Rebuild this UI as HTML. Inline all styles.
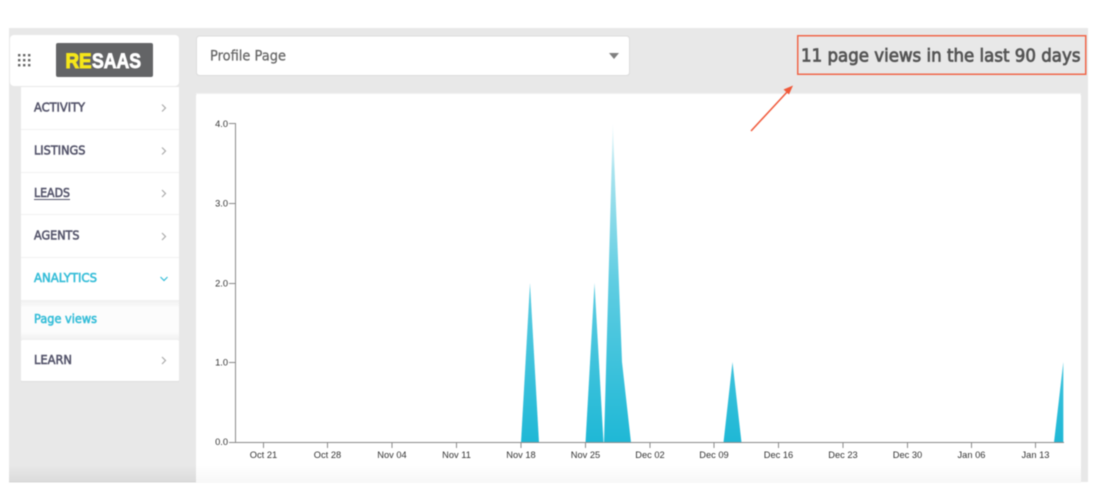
<!DOCTYPE html>
<html>
<head>
<meta charset="utf-8">
<style>
html,body{margin:0;padding:0;background:#fff;width:1108px;height:502px;overflow:hidden}
svg{display:block;filter:blur(.45px)}
.m{font-family:"DejaVu Sans","Liberation Sans",sans-serif;font-size:12.5px;font-weight:normal;fill:#55556b;stroke:#55556b;stroke-width:.6px}
.t{fill:#35bdd8;stroke:#35bdd8}
.a{font-family:"Liberation Sans",sans-serif;font-size:9.3px;fill:#333}
.c{fill:none;stroke:#aaa;stroke-width:1.2}
</style>
</head>
<body>
<svg width="1108" height="502" viewBox="0 0 1108 502" xmlns="http://www.w3.org/2000/svg">
<defs>
<linearGradient id="g" gradientUnits="userSpaceOnUse" x1="0" y1="442" x2="0" y2="123">
<stop offset="0" stop-color="#1fb8d6"/>
<stop offset=".5" stop-color="#5fcde2"/>
<stop offset=".85" stop-color="#a8e3ee"/>
<stop offset="1" stop-color="#f2fbfd"/>
</linearGradient>
<linearGradient id="fade" x1="0" y1="0" x2="0" y2="1">
<stop offset="0" stop-color="#fff"/>
<stop offset="1" stop-color="#f7f7f7"/>
</linearGradient>
<linearGradient id="sub" x1="0" y1="0" x2="0" y2="1">
<stop offset="0" stop-color="#f0f0f0"/>
<stop offset=".2" stop-color="#fcfcfc"/>
<stop offset=".8" stop-color="#fcfcfc"/>
<stop offset="1" stop-color="#f0f0f0"/>
</linearGradient>
<linearGradient id="shade" x1="0" y1="0" x2="0" y2="1">
<stop offset="0" stop-color="#e8e8e8"/>
<stop offset="1" stop-color="#dcdcdc"/>
</linearGradient>
</defs>

<!-- page background -->
<rect x="9" y="28" width="1079" height="454" fill="#e8e8e8"/>
<rect x="9" y="465" width="187" height="16" fill="url(#shade)"/>
<rect x="9" y="481" width="358" height="1.5" fill="#d8d8d8"/>

<!-- sidebar header -->
<rect x="10" y="35" width="169" height="51" rx="4" fill="#fff"/>
<g fill="#666">
<rect x="18" y="54" width="2.4" height="2.4"/><rect x="23" y="54" width="2.4" height="2.4"/><rect x="28" y="54" width="2.4" height="2.4"/>
<rect x="18" y="59" width="2.4" height="2.4"/><rect x="23" y="59" width="2.4" height="2.4"/><rect x="28" y="59" width="2.4" height="2.4"/>
<rect x="18" y="64" width="2.4" height="2.4"/><rect x="23" y="64" width="2.4" height="2.4"/><rect x="28" y="64" width="2.4" height="2.4"/>
</g>
<rect x="56" y="43" width="97" height="34" rx="2" fill="#636466"/>
<text x="65.5" y="68" font-family="'Liberation Sans',sans-serif" font-size="21" font-weight="bold" fill="#f5e61a" stroke="#f5e61a" stroke-width="1.1" textLength="26" lengthAdjust="spacingAndGlyphs">RE</text>
<text x="92" y="68" font-family="'Liberation Sans',sans-serif" font-size="21" font-weight="bold" fill="#fff" stroke="#fff" stroke-width=".9" textLength="49" lengthAdjust="spacingAndGlyphs">SAAS</text>

<!-- sidebar menu -->
<rect x="21" y="87" width="158" height="213" fill="#fff"/>
<rect x="21" y="300" width="158" height="40" fill="url(#sub)"/>
<rect x="21" y="340" width="158" height="41" rx="1.5" fill="#fff"/>
<rect x="21" y="381" width="158" height="1" fill="#dedede"/>
<g stroke="#f2f2f2" stroke-width="1">
<line x1="21" y1="129.5" x2="179" y2="129.5"/>
<line x1="21" y1="172.5" x2="179" y2="172.5"/>
<line x1="21" y1="214.5" x2="179" y2="214.5"/>
<line x1="21" y1="257.5" x2="179" y2="257.5"/>
</g>
<text class="m" x="34" y="111.5" textLength="51" lengthAdjust="spacingAndGlyphs">ACTIVITY</text>
<text class="m" x="34" y="154.5" textLength="51.5" lengthAdjust="spacingAndGlyphs">LISTINGS</text>
<text class="m" x="34" y="197" textLength="36" lengthAdjust="spacingAndGlyphs">LEADS</text>
<line x1="34" y1="199.5" x2="70" y2="199.5" stroke="#55556b" stroke-width="1"/>
<text class="m" x="34" y="239.5" textLength="45.5" lengthAdjust="spacingAndGlyphs">AGENTS</text>
<text class="m t" x="34" y="282" textLength="63" lengthAdjust="spacingAndGlyphs">ANALYTICS</text>
<text class="m t" x="34" y="323" textLength="63" lengthAdjust="spacingAndGlyphs">Page views</text>
<text class="m" x="34" y="364" textLength="38" lengthAdjust="spacingAndGlyphs">LEARN</text>
<path class="c" d="M162 104.5l3.5 3.5-3.5 3.5"/>
<path class="c" d="M162 147.5l3.5 3.5-3.5 3.5"/>
<path class="c" d="M162 190l3.5 3.5-3.5 3.5"/>
<path class="c" d="M162 233l3.5 3.5-3.5 3.5"/>
<path d="M160.5 277l3.5 3.5 3.5-3.5" fill="none" stroke="#35bdd8" stroke-width="1.2"/>
<path class="c" d="M162 357l3.5 3.5-3.5 3.5"/>

<!-- select -->
<rect x="196.5" y="36" width="433" height="39.5" rx="3" fill="#fff" stroke="#dcdcdc" stroke-width="1"/>
<text x="210" y="60.5" font-family="'DejaVu Sans',sans-serif" font-size="14.5" fill="#666" stroke="#666" stroke-width=".25" textLength="76" lengthAdjust="spacingAndGlyphs">Profile Page</text>
<path d="M609 53h10l-5 6z" fill="#808080"/>

<!-- views label -->
<rect x="797.75" y="35.75" width="288" height="38.5" fill="none" stroke="#f0674a" stroke-width="1.5"/>
<text x="801" y="61.5" font-family="'DejaVu Sans',sans-serif" font-size="18" fill="#555" stroke="#555" stroke-width=".8" textLength="279.5" lengthAdjust="spacingAndGlyphs">11 page views in the last 90 days</text>

<!-- chart card -->
<path d="M196 96a3 3 0 0 1 3-3H1078a3 3 0 0 1 3 3V465H196z" fill="#fff"/>
<rect x="196" y="465" width="885" height="18" fill="url(#fade)"/>
<rect x="196" y="93" width="885" height="1" fill="#f2f2f2"/>

<!-- arrow -->
<line x1="751" y1="131" x2="788" y2="91" stroke="#f0593a" stroke-width="1.5"/>
<path d="M793 85.5l-9.5 4 5.5 5z" fill="#f0593a"/>

<!-- areas -->
<g fill="url(#g)">
<path d="M521 442.5L530 283L539 442.5z"/>
<path d="M585.5 442.5L594.5 283L603.5 442.5z"/>
<path d="M604 442.5L612.8 123L622 362L631 442.5z"/>
<path d="M723.5 442.5L732.5 362L741.5 442.5z"/>
<path d="M1054 442.5L1063.3 362V442.5z"/>
</g>

<!-- axes -->
<g stroke="#8a8a8a" stroke-width="1" fill="none">
<path d="M229 123.5h6.5V442.5H1064"/>
<path d="M229 203.5h6M229 283.5h6M229 362.5h6M229 442.5h6"/>
<path d="M263.5 443v5M327.5 443v5M392 443v5M456.5 443v5M521 443v5M585.5 443v5M650 443v5M714 443v5M778.5 443v5M843 443v5M907.5 443v5M971.5 443v5M1035.5 443v5"/>
</g>
<g>
<text class="a" x="228" y="127" text-anchor="end">4.0</text>
<text class="a" x="228" y="206.5" text-anchor="end">3.0</text>
<text class="a" x="228" y="286.5" text-anchor="end">2.0</text>
<text class="a" x="228" y="365.5" text-anchor="end">1.0</text>
<text class="a" x="228" y="445" text-anchor="end">0.0</text>
</g>
<g>
<text class="a" x="263.5" y="458" text-anchor="middle">Oct 21</text>
<text class="a" x="327.5" y="458" text-anchor="middle">Oct 28</text>
<text class="a" x="392" y="458" text-anchor="middle">Nov 04</text>
<text class="a" x="456.5" y="458" text-anchor="middle">Nov 11</text>
<text class="a" x="521" y="458" text-anchor="middle">Nov 18</text>
<text class="a" x="585.5" y="458" text-anchor="middle">Nov 25</text>
<text class="a" x="650" y="458" text-anchor="middle">Dec 02</text>
<text class="a" x="714" y="458" text-anchor="middle">Dec 09</text>
<text class="a" x="778.5" y="458" text-anchor="middle">Dec 16</text>
<text class="a" x="843" y="458" text-anchor="middle">Dec 23</text>
<text class="a" x="907.5" y="458" text-anchor="middle">Dec 30</text>
<text class="a" x="971.5" y="458" text-anchor="middle">Jan 06</text>
<text class="a" x="1035.5" y="458" text-anchor="middle">Jan 13</text>
</g>
</svg>
</body>
</html>
